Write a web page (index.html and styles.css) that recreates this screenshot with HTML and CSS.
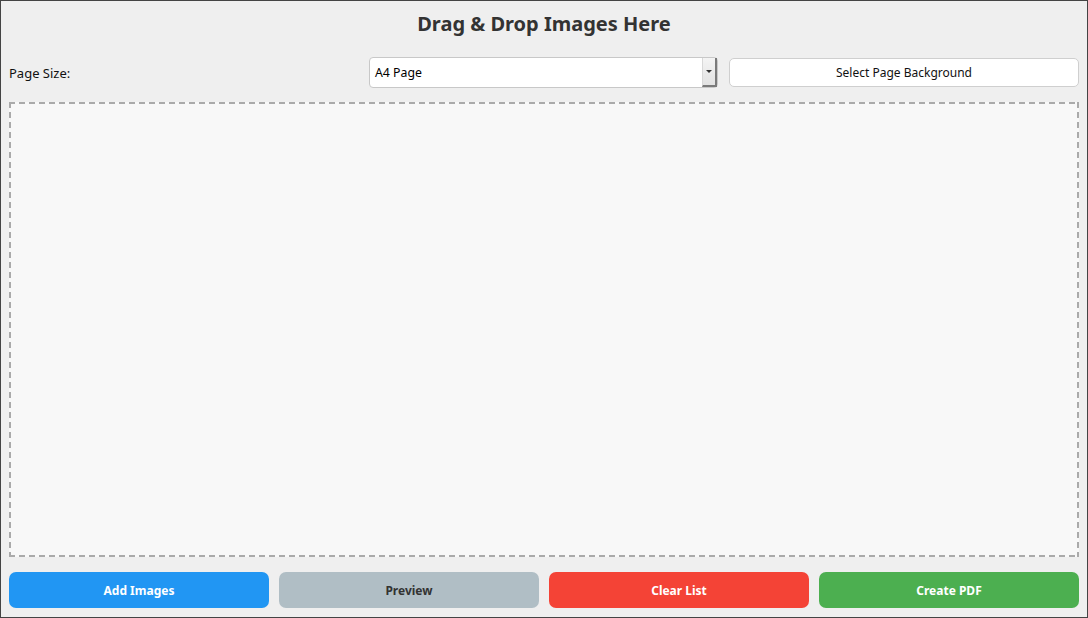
FILE: index.html
```html
<!DOCTYPE html>
<html>
<head>
<meta charset="utf-8">
<link rel="stylesheet" href="styles.css">
</head>
<body>
<div class="window">
  <h1 class="title">Drag &amp; Drop Images Here</h1>
  <div class="options">
    <span class="label">Page Size:</span>
    <div class="combo">
      <span class="combo-text">A4 Page</span>
      <span class="combo-arrow"><span class="tri"></span></span>
    </div>
    <button class="plain-btn">Select Page Background</button>
  </div>
  <div class="drop-area"></div>
  <div class="actions">
    <button class="act blue">Add Images</button>
    <button class="act gray">Preview</button>
    <button class="act red">Clear List</button>
    <button class="act green">Create PDF</button>
  </div>
</div>
</body>
</html>
```
FILE: styles.css
```css
html, body {
  margin: 0;
  padding: 0;
  width: 1088px;
  height: 618px;
  overflow: hidden;
}
body {
  font-family: "Noto Sans", "DejaVu Sans", sans-serif;
  font-size: 12px;
  color: #000;
}
.window {
  box-sizing: border-box;
  width: 1088px;
  height: 618px;
  border: 1px solid #444;
  background: #efefef;
  padding: 8px 8px 9px 8px;
  display: flex;
  flex-direction: column;
}
.title {
  margin: 0;
  height: 30px;
  line-height: 30px;
  text-align: center;
  font-size: 20px;
  font-weight: bold;
  color: #333;
}
.options {
  margin-top: 18px;
  height: 30px;
  display: grid;
  grid-template-columns: 350px 350px 350px;
  column-gap: 10px;
  align-items: center;
}
.label {
  font-size: 13px;
  color: #111;
}
.combo {
  box-sizing: border-box;
  height: 31px;
  width: 349px;
  background: #fff;
  border: 1px solid #c8c8c8;
  border-radius: 4px;
  display: flex;
  align-items: center;
}
.combo-text {
  flex: 1;
  padding-left: 5px;
  font-size: 12.3px;
}
.combo-arrow {
  box-sizing: border-box;
  width: 15px;
  align-self: stretch;
  background: linear-gradient(#f4f4f4, #e2e2e2);
  border-left: 1px solid #d8d8d8;
  border-right: 2px solid #7a7a7a;
  border-bottom: 2px solid #7a7a7a;
  display: flex;
  align-items: center;
  justify-content: center;
}
.tri {
  width: 0;
  height: 0;
  border-left: 3px solid transparent;
  border-right: 3px solid transparent;
  border-top: 3px solid #333;
}
.plain-btn {
  box-sizing: border-box;
  height: 29px;
  width: 350px;
  background: #fff;
  border: 1px solid #cfcfcf;
  border-radius: 5px;
  font-family: "Noto Sans", "DejaVu Sans", sans-serif;
  font-size: 12px;
  color: #111;
  padding: 0;
}
.drop-area {
  margin-top: 15px;
  flex: 1;
  background:
    repeating-linear-gradient(90deg, #aaa 0 6px, transparent 6px 10px) left top / 100% 2px no-repeat,
    repeating-linear-gradient(90deg, #aaa 0 6px, transparent 6px 10px) left bottom / 100% 2px no-repeat,
    repeating-linear-gradient(180deg, #aaa 0 6px, transparent 6px 10px) left top / 2px 100% no-repeat,
    repeating-linear-gradient(180deg, #aaa 0 6px, transparent 6px 10px) right top / 2px 100% no-repeat,
    #f8f8f8;
}
.actions {
  margin-top: 15px;
  height: 36px;
  display: grid;
  grid-template-columns: repeat(4, 1fr);
  column-gap: 10px;
}
.act {
  border: none;
  border-radius: 7px;
  font-family: "Noto Sans", "DejaVu Sans", sans-serif;
  font-size: 12px;
  font-weight: bold;
  color: #fff;
  padding: 0;
}
.blue { background: #2196f3; }
.gray { background: #b0bec5; color: #333; }
.red { background: #f44336; }
.green { background: #4caf50; }
```
